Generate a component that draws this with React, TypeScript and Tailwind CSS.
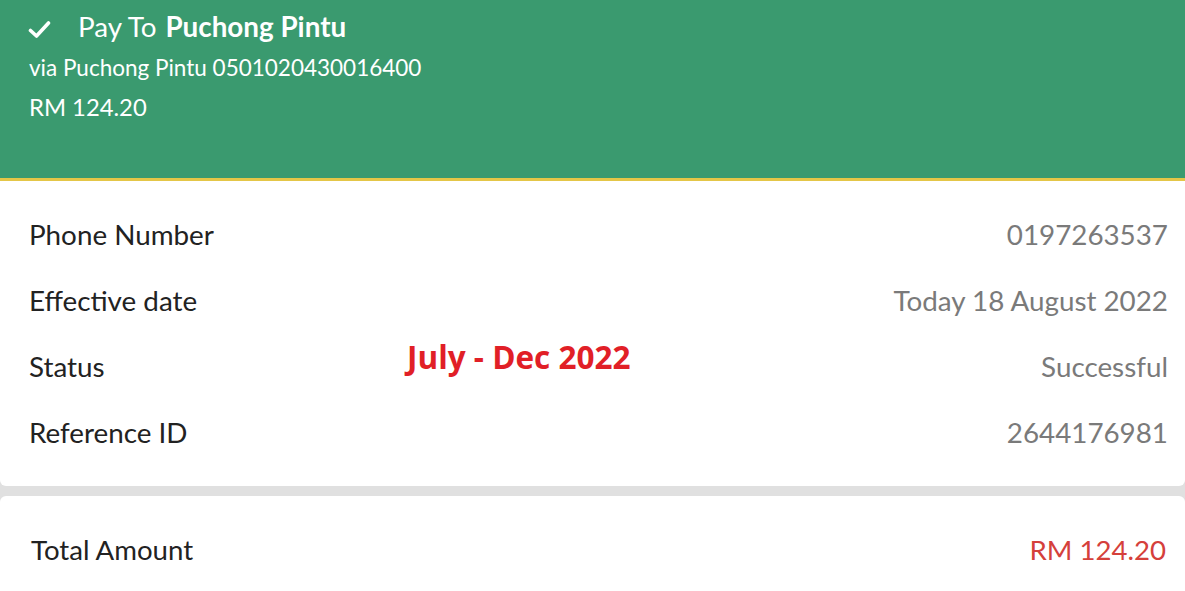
const rows = [
  { label: "Phone Number", value: "0197263537" },
  { label: "Effective date", value: "Today 18 August 2022" },
  { label: "Status", value: "Successful" },
  { label: "Reference ID", value: "2644176981" },
];

export default function App() {
  return (
    <div className="relative min-h-screen bg-[#e0e0e0] font-['Lato',sans-serif]">
      {/* Header */}
      <header className="h-[181px] bg-[#3a9a6f] border-b-[3px] border-[#e4c647] px-[28px] pt-[10px] text-white">
        <div className="flex h-[34px] items-center">
          <svg width="23" height="19" viewBox="0 0 23 19" className="mt-[4px]">
            <path d="M2.5 10.5 L8.5 16 L20.5 3" fill="none" stroke="white" strokeWidth="3.6" strokeLinecap="round" strokeLinejoin="round" />
          </svg>
          <span className="ml-[27px] text-[27.8px] leading-[34px]">Pay To</span>
          <span className="ml-[9px] text-[27.8px] font-bold leading-[34px]">Puchong Pintu</span>
        </div>
        <div className="ml-px mt-[10px] text-[22.5px] leading-[28px]">via Puchong Pintu 0501020430016400</div>
        <div className="ml-px mt-[11px] text-[23.8px] leading-[28px]">RM 124.20</div>
      </header>

      {/* Details */}
      <section className="rounded-b-md bg-white pl-[29px] pr-[17px] pt-[21px] pb-[20px]">
        {rows.map((r) => (
          <div key={r.label} className="flex h-[66px] items-center justify-between text-[27.8px]">
            <span className="text-[#222]">{r.label}</span>
            <span className="text-[#7a7a7a]">{r.value}</span>
          </div>
        ))}
      </section>

      <section className="mt-[10px] rounded-t-md bg-white pl-[31px] pr-[19px] pt-[21px] pb-[20px]">
        <div className="flex h-[66px] items-center justify-between text-[27.6px]">
          <span className="text-[#222]">Total Amount</span>
          <span className="text-[#d5403b]">RM 124.20</span>
        </div>
      </section>

      {/* Overlay stamp */}
      <div className="absolute left-[407px] top-[333px] font-['Open_Sans',sans-serif] text-[31.5px] font-bold text-[#e11f27]">
        July - Dec 2022
      </div>
    </div>
  );
}
